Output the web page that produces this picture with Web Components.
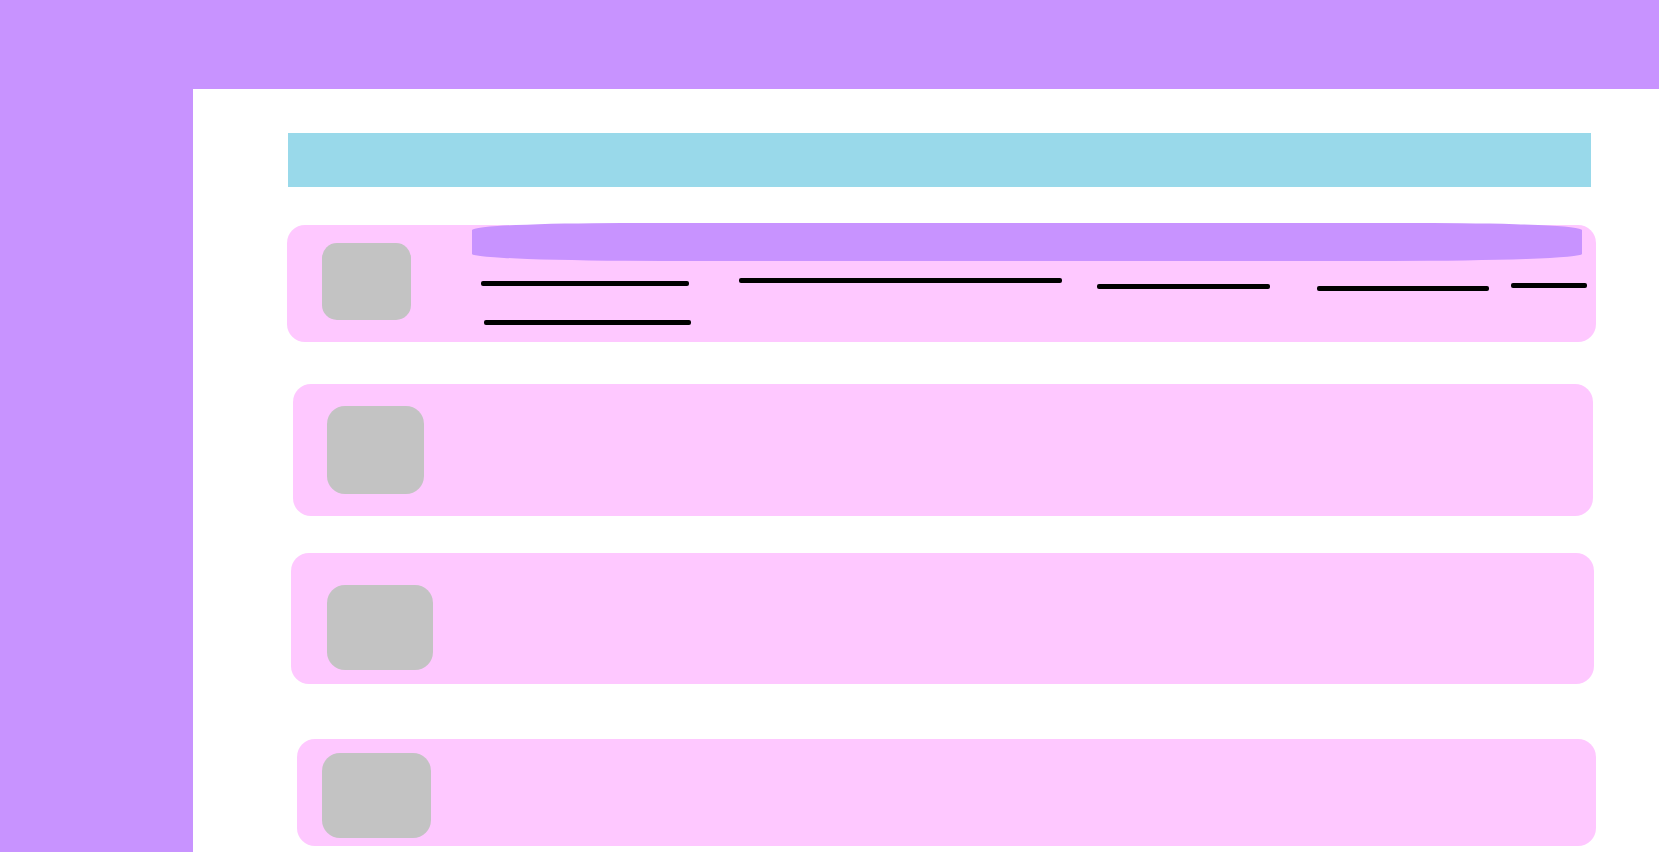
<!DOCTYPE html>
<html lang="en">
<head>
<meta charset="utf-8">
<meta name="viewport" content="width=device-width, initial-scale=1">
<title>List wireframe</title>
<style>
  html, body { margin: 0; }
  body {
    --frame: #c893ff;
    --bar: #99d9ea;
    --card: #fec8ff;
    --thumb: #c3c3c3;
    --ink: #000;
    background: #fff;
    font-family: "Liberation Sans", sans-serif;
  }
  .first  { margin: 38px 0 0; padding: 18px 9px 17px 35px; --thumb-w: 89px; --thumb-h: 77px; --thumb-r: 15px; }
  .second { margin: 42px 3px 0 6px; padding: 22px 34px; --thumb-w: 97px; --thumb-h: 88px; }
  .third  { margin: 37px 2px 0 4px; padding: 32px 36px 14px; --thumb-w: 106px; --thumb-h: 85px; }
  .fourth { margin: 55px 0 0 10px; padding: 14px 25px 8px; --thumb-w: 109px; --thumb-h: 85px; }
</style>
</head>
<body>
<page-shell>
  <filter-bar></filter-bar>
  <list-card class="first">
    <media-thumb slot="media"></media-thumb>
    <card-details></card-details>
  </list-card>
  <list-card class="second"><media-thumb slot="media"></media-thumb></list-card>
  <list-card class="third"><media-thumb slot="media"></media-thumb></list-card>
  <list-card class="fourth"><media-thumb slot="media"></media-thumb></list-card>
</page-shell>

<script>
  const define = (name, html) => {
    const template = document.createElement('template');
    template.innerHTML = html;
    customElements.define(name, class extends HTMLElement {
      constructor() {
        super();
        this.attachShadow({ mode: 'open' }).append(template.content.cloneNode(true));
      }
    });
  };

  define('page-shell', `
    <style>
      :host { display: grid; grid-template: 89px 1fr / 193px minmax(0, 1fr); min-height: 100vh; }
      header { grid-column: 1 / -1; background: var(--frame); }
      nav { background: var(--frame); }
      main { display: flex; flex-direction: column; padding: 44px 63px 4px 94px; background: #fff; }
    </style>
    <header></header>
    <nav></nav>
    <main><slot></slot></main>`);

  define('filter-bar', `
    <style>
      :host { display: block; height: 54px; margin: 0 5px 0 1px; background: var(--bar); }
    </style>`);

  define('list-card', `
    <style>
      :host { display: flex; align-items: flex-start; gap: 61px; border-radius: 18px; background: var(--card); }
    </style>
    <slot name="media"></slot>
    <slot></slot>`);

  define('media-thumb', `
    <style>
      :host {
        display: block; flex: none;
        width: var(--thumb-w); height: var(--thumb-h);
        border-radius: var(--thumb-r, 18px);
        background: var(--thumb);
      }
    </style>`);

  define('text-stroke', `
    <style>
      :host { display: block; height: 5px; border-radius: 2px; background: var(--ink); }
    </style>`);

  // Title banner rises past the card's top edge; the strokes below stand for text columns.
  define('card-details', `
    <style>
      :host { display: block; flex: 1; min-width: 0; }
      .banner {
        height: 38px; margin: -20px 5px 17px 0;
        border-radius: 150px 150px 190px 190px / 7px;
        background: var(--frame);
      }
      .strokes {
        display: grid; align-items: start;
        grid-template-columns: 208fr 50fr 323fr 35fr 173fr 47fr 172fr 22fr 76fr;
        row-gap: 29px;
        margin-left: 9px;
      }
      .a { grid-column: 1; margin-top: 3px; }
      .b { grid-column: 3; }
      .c { grid-column: 5; margin-top: 6px; }
      .d { grid-column: 7; margin-top: 8px; }
      .e { grid-column: 9; margin-top: 5px; }
      .f { grid-column: 1; margin: 0 -2px 0 3px; }
    </style>
    <div class="banner"></div>
    <div class="strokes">
      <text-stroke class="a"></text-stroke>
      <text-stroke class="b"></text-stroke>
      <text-stroke class="c"></text-stroke>
      <text-stroke class="d"></text-stroke>
      <text-stroke class="e"></text-stroke>
      <text-stroke class="f"></text-stroke>
    </div>`);
</script>
</body>
</html>
